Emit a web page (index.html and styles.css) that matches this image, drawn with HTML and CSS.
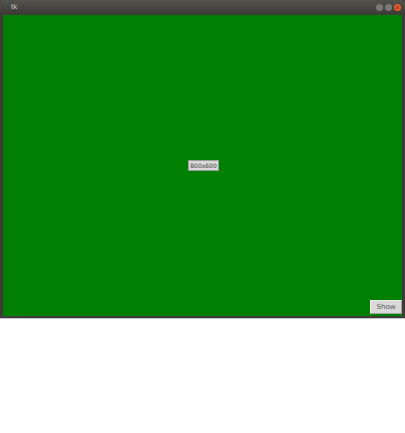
FILE: index.html
```html
<!DOCTYPE html>
<html>
<head>
<meta charset="utf-8">
<link rel="stylesheet" href="styles.css">
</head>
<body>
<div class="window">
  <div class="titlebar">
    <span class="title">tk</span>
    <div class="controls">
      <span class="btn min"></span>
      <span class="btn max"></span>
      <span class="btn close"><svg width="7" height="7" viewBox="0 0 7 7"><path d="M2 2 L5 5 M5 2 L2 5" stroke="#6a2a10" stroke-width="0.9"/></svg></span>
    </div>
  </div>
  <div class="frame">
    <div class="canvas">
      <span class="size">800x600</span>
      <button class="show">Show</button>
    </div>
  </div>
</div>
</body>
</html>
```
FILE: styles.css
```css
html, body {
  margin: 0;
  padding: 0;
  background: #ffffff;
}
.window {
  width: 405px;
  height: 318px;
  background: #3c3b37;
  display: flex;
  flex-direction: column;
  border-bottom: 1px solid #c8c8c8;
}
.titlebar {
  height: 14px;
  background: linear-gradient(#55524c, #3c3b37);
  display: flex;
  align-items: center;
  justify-content: space-between;
  padding: 0 4px 0 11px;
  font-family: "Liberation Sans", sans-serif;
  font-size: 8px;
  color: #d0ccc2;
  border-radius: 3px 3px 0 0;
}
.title {
  line-height: 14px;
}
.controls {
  display: flex;
  gap: 2px;
  align-items: center;
}
.btn {
  width: 7px;
  height: 7px;
  border-radius: 50%;
  background: #7a7975;
  display: flex;
  align-items: center;
  justify-content: center;
}
.btn.close {
  background: #ea5a2a;
}
.frame {
  flex: 1;
  padding: 1px 3px 2px 3px;
  display: flex;
}
.canvas {
  flex: 1;
  background: #008000;
  position: relative;
  display: flex;
  align-items: center;
  justify-content: center;
}
.size {
  font-family: "DejaVu Sans", sans-serif;
  font-size: 6px;
  color: #444;
  background: #d9d9d9;
  border: 1px solid #9a9a9a;
  padding: 1px 1px;
  line-height: 7px;
  margin-left: 2px;
}
.show {
  position: absolute;
  right: 0;
  bottom: 2px;
  width: 32px;
  height: 14px;
  padding: 0;
  background: #d9d9d9;
  border: 1px solid #ececec;
  border-right-color: #a0a0a0;
  border-bottom-color: #a0a0a0;
  font-family: "DejaVu Sans", sans-serif;
  font-size: 7px;
  color: #555;
}
```
